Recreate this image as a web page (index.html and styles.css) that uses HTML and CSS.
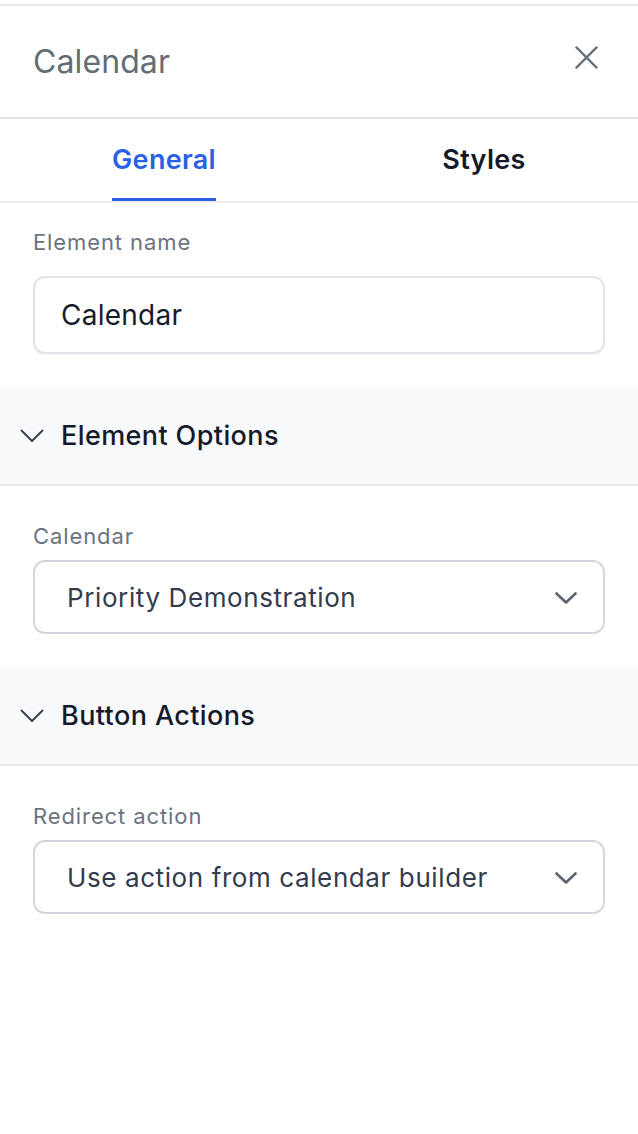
FILE: index.html
```html
<!DOCTYPE html>
<html lang="en">
<head>
<meta charset="utf-8">
<title>Calendar</title>
<link rel="stylesheet" href="styles.css">
</head>
<body>
<div class="panel">
  <header class="panel-header">
    <h1 class="panel-title">Calendar</h1>
    <button class="close-btn" aria-label="Close">
      <svg width="24" height="24" viewBox="0 0 24 24" fill="none" stroke="currentColor" stroke-width="2.4" stroke-linecap="round"><path d="M1.5 1.5L22.5 22.5M22.5 1.5L1.5 22.5"/></svg>
    </button>
  </header>
  <nav class="tabs">
    <div class="tab"><span class="tab-label active">General</span></div>
    <div class="tab"><span class="tab-label">Styles</span></div>
  </nav>
  <div class="field-block first">
    <label class="field-label label-name">Element name</label>
    <div class="text-input">Calendar</div>
  </div>
  <div class="section-head">
    <svg class="section-chev" width="24" height="14" viewBox="0 0 24 14" fill="none" stroke="currentColor" stroke-width="2" stroke-linecap="round" stroke-linejoin="round"><path d="M1.5 1.5L12 12L22.5 1.5"/></svg>
    <span>Element Options</span>
  </div>
  <div class="field-block">
    <label class="field-label">Calendar</label>
    <div class="select">
      <span>Priority Demonstration</span>
      <svg width="22" height="12" viewBox="0 0 22 12" fill="none" stroke="currentColor" stroke-width="2.6" stroke-linecap="round" stroke-linejoin="round"><path d="M1.5 1.5L11 10.5L20.5 1.5"/></svg>
    </div>
  </div>
  <div class="section-head">
    <svg class="section-chev" width="24" height="14" viewBox="0 0 24 14" fill="none" stroke="currentColor" stroke-width="2" stroke-linecap="round" stroke-linejoin="round"><path d="M1.5 1.5L12 12L22.5 1.5"/></svg>
    <span>Button Actions</span>
  </div>
  <div class="field-block">
    <label class="field-label">Redirect action</label>
    <div class="select">
      <span>Use action from calendar builder</span>
      <svg width="22" height="12" viewBox="0 0 22 12" fill="none" stroke="currentColor" stroke-width="2.6" stroke-linecap="round" stroke-linejoin="round"><path d="M1.5 1.5L11 10.5L20.5 1.5"/></svg>
    </div>
  </div>
</div>
</body>
</html>
```

FILE: styles.css
```css
* { box-sizing: border-box; }
html, body { margin: 0; padding: 0; background: #ffffff; }
body {
  font-family: Inter, "Noto Sans", "Liberation Sans", sans-serif;
  color: #111827;
  overflow: hidden;
}
.panel {
  margin-top: 4px;
  border-top: 2px solid #e8e9ec;
  width: 638px;
  overflow: hidden;
}
.panel-header {
  height: 113px;
  display: flex;
  align-items: center;
  justify-content: space-between;
  padding: 0 40px 0 33px;
  border-bottom: 2px solid #e1e4e8;
}
.panel-title {
  margin: 0;
  font-size: 32px;
  font-weight: 400;
  color: #626d76;
  line-height: 40px;
  letter-spacing: 0.1px;
}
.close-btn {
  border: 0;
  background: none;
  padding: 0;
  color: #66717a;
  display: flex;
  margin-top: -8px;
}
.close-btn svg { width: 23px; height: 23px; }
.tabs {
  display: grid;
  grid-template-columns: 320px 320px;
  padding-left: 4px;
  height: 84px;
  border-bottom: 2px solid #eceef1;
}
.tab {
  display: flex;
  justify-content: center;
}
.tab-label {
  display: flex;
  align-items: center;
  height: 100%;
  padding-top: 2px;
  border-bottom: 3px solid transparent;
  font-size: 27px;
  font-weight: 600;
  letter-spacing: 0.3px;
  color: #141a2a;
}
.tab-label.active {
  color: #2b5fe5;
  border-bottom-color: #2b5fe5;
}
.field-block {
  padding: 38px 33px 33px;
}
.field-block.first {
  padding-top: 27px;
}
.field-label {
  display: block;
  font-size: 22px;
  line-height: 24px;
  letter-spacing: 0.9px;
  color: #6b7380;
  margin-bottom: 12px;
}
.label-name {
  margin-bottom: 22px;
}
.text-input {
  height: 78px;
  border: 2px solid #e3e4e8;
  border-radius: 12px;
  box-shadow: 0 1px 2px rgba(16, 24, 40, 0.06);
  display: flex;
  align-items: center;
  padding-left: 26px;
  font-size: 28px;
  letter-spacing: 0.25px;
  color: #161c2c;
}
.select {
  height: 74px;
  border: 2px solid #d3d6dc;
  border-radius: 12px;
  display: flex;
  align-items: center;
  justify-content: space-between;
  padding: 0 26px 0 32px;
  font-size: 26px;
  letter-spacing: 0.6px;
  color: #333b4d;
}
.select svg { color: #5b6272; margin-top: 2px; }
.section-head {
  height: 99px;
  background: #f8f9fb;
  border-bottom: 2px solid #e8e9ec;
  display: flex;
  align-items: center;
  padding-left: 20px;
  gap: 17px;
  font-size: 27px;
  font-weight: 500;
  letter-spacing: 0.4px;
  color: #141a2a;
}
.section-chev { color: #3b4252; }
```
